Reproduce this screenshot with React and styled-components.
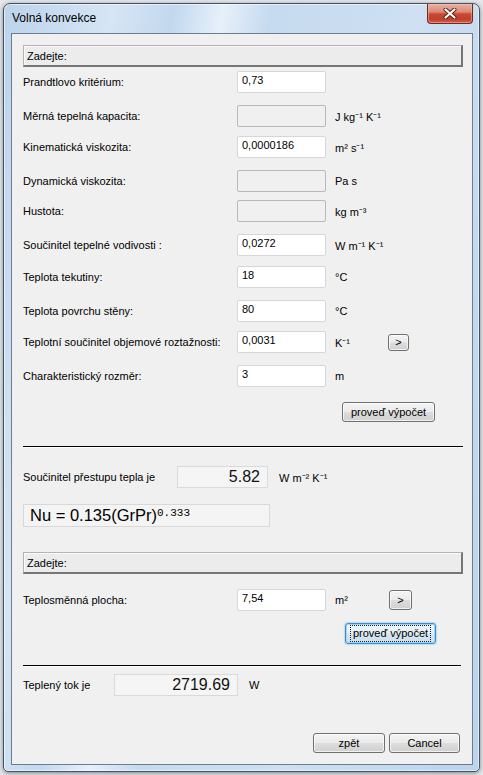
import React from 'react';
import styled, { createGlobalStyle } from 'styled-components';

const Global = createGlobalStyle`
  html, body { margin: 0; padding: 0; background: #e4e6ea; }
  body { width: 483px; height: 775px; overflow: hidden; font-family: "Liberation Sans", Arial, sans-serif; }
  #root { width: 483px; height: 775px; padding: 3px; box-sizing: border-box; }
`;

const UI_FONT = `"Liberation Sans", Arial, sans-serif`;
const UI_SIZE = '11px';

const Window = styled.div`
  width: 477px;
  height: 769px;
  box-sizing: border-box;
  border: 1px solid #41536a;
  border-radius: 7px 7px 5px 5px;
  background: linear-gradient(100deg, #bcd3eb 0%, #d6e5f5 18%, #c3d8ee 28%, #e6f0fa 36%, #c6daef 44%, #cee0f2 68%, #bdd3eb 100%);
  box-shadow: 0 1px 4px rgba(0, 0, 0, 0.45), inset 0 0 0 1px rgba(255, 255, 255, 0.55);
  display: flex;
  flex-direction: column;
  padding: 0 6px 6px 7px;
`;

const TitleBar = styled.div`
  height: 29px;
  display: flex;
  justify-content: space-between;
  align-items: flex-start;
  flex: none;
`;

const Title = styled.div`
  margin: 7px 0 0 1px;
  font-family: ${UI_FONT};
  font-size: 12px;
  line-height: 14px;
  color: #000;
`;

const CloseButton = styled.div`
  width: 46px;
  height: 20px;
  box-sizing: border-box;
  border: 1px solid #6e2a20;
  border-top: none;
  border-radius: 0 0 4px 4px;
  background: linear-gradient(#eab0a2 0%, #da8a76 42%, #c84a35 52%, #c0402c 80%, #d2624b 100%);
  box-shadow: inset 0 0 0 1px rgba(255, 200, 190, 0.45);
  display: flex;
  align-items: center;
  justify-content: center;
`;

const Client = styled.div`
  flex: 1;
  box-sizing: border-box;
  border: 1px solid #6b7d92;
  background: #f0f0f0;
  padding: 11px 9px 0 11px;
  display: flex;
  flex-direction: column;
`;

const SectionHeader = styled.div`
  flex: none;
  height: 22px;
  margin-top: ${p => p.$mt || 0}px;
  box-sizing: border-box;
  border-top: 1px solid #b4b4b4;
  border-left: 1px solid #b4b4b4;
  border-right: 2px solid #767676;
  border-bottom: 2px solid #767676;
  background: #ececec;
  box-shadow: inset 1px 1px 0 #fafafa;
  padding-left: 3px;
  display: flex;
  align-items: center;
  font-family: ${UI_FONT};
  font-size: ${UI_SIZE};
  color: #000;
`;

const Row = styled.div`
  flex: none;
  height: 22px;
  margin-top: ${p => p.$mt || 0}px;
  display: flex;
  align-items: center;
  font-family: ${UI_FONT};
  font-size: ${UI_SIZE};
  color: #000;
`;

const Label = styled.div`
  width: ${p => p.$w || 214}px;
  flex: none;
  white-space: nowrap;
`;

const Field = styled.input`
  width: 89px;
  height: 22px;
  box-sizing: border-box;
  margin: 0;
  border: 1px solid ${p => (p.disabled ? '#b9b9b9' : '#d6d6d6')};
  border-radius: 2px;
  background: ${p => (p.disabled ? '#f0f0f0' : '#ffffff')};
  padding: 0 4px 4px 4px;
  font-family: ${UI_FONT};
  font-size: ${UI_SIZE};
  color: #000;
  outline: none;
  flex: none;
`;

const Unit = styled.div`
  margin-left: ${p => p.$ml || 9}px;
  width: ${p => p.$w || 'auto'};
  flex: none;
  white-space: nowrap;
`;

const Button = styled.button`
  width: ${p => p.$w}px;
  height: ${p => p.$h}px;
  margin: 0;
  padding: 0;
  flex: none;
  box-sizing: border-box;
  border: 1px solid ${p => (p.$focused ? '#3c8dd0' : '#707070')};
  border-radius: 3px;
  background: ${p =>
    p.$focused
      ? 'linear-gradient(#f0f7fb 0%, #e4eff6 48%, #d6e7f2 52%, #cddfec 100%)'
      : 'linear-gradient(#f3f3f3 0%, #ebebeb 48%, #dddddd 52%, #d0d0d0 100%)'};
  box-shadow: ${p =>
    p.$focused
      ? 'inset 0 0 0 1px #9fd6f5, 0 0 1px 1px rgba(100, 180, 230, 0.35)'
      : 'inset 0 0 0 1px rgba(255, 255, 255, 0.7)'};
  font-family: ${UI_FONT};
  font-size: ${UI_SIZE};
  color: #000;
  display: flex;
  align-items: center;
  justify-content: center;
`;

const FocusText = styled.span`
  outline: 1px dotted #202020;
  outline-offset: 1px;
  padding: 0 1px;
  line-height: 13px;
`;

const ButtonRow = styled.div`
  flex: none;
  margin-top: ${p => p.$mt || 0}px;
  padding-left: ${p => p.$pl || 0}px;
  padding-right: ${p => p.$pr || 0}px;
  display: flex;
  justify-content: ${p => (p.$end ? 'flex-end' : 'flex-start')};
  gap: 4px;
`;

const Divider = styled.div`
  flex: none;
  margin-top: ${p => p.$mt || 0}px;
  width: ${p => p.$w}px;
  height: 1px;
  background: #000;
  box-shadow: 0 1px 0 #ffffff;
`;

const ResultBox = styled.div`
  width: ${p => p.$w}px;
  height: 22px;
  flex: none;
  box-sizing: border-box;
  border: 1px solid #dadada;
  background: #f5f5f5;
  padding-right: 7px;
  display: flex;
  align-items: center;
  justify-content: flex-end;
  font-family: ${UI_FONT};
  font-size: 16px;
  color: #111;
`;

const FormulaBox = styled.div`
  flex: none;
  margin-top: ${p => p.$mt || 0}px;
  width: 247px;
  height: 23px;
  box-sizing: border-box;
  border: 1px solid #d8d8d8;
  background: #f4f4f4;
  padding-left: 6px;
  display: flex;
  align-items: center;
  font-family: ${UI_FONT};
  font-size: 16.5px;
  color: #000;
  white-space: nowrap;
`;

const Sup = styled.span`
  font-family: "Liberation Mono", "DejaVu Sans Mono", monospace;
  font-size: 11px;
  align-self: flex-start;
  margin-top: 2px;
`;

const inputs = [
  { label: 'Prandtlovo kritérium:', value: '0,73', unit: '', mt: 4 },
  { label: 'Měrná tepelná kapacita:', value: '', unit: 'J kg⁻¹ K⁻¹', disabled: true, mt: 12 },
  { label: 'Kinematická viskozita:', value: '0,0000186', unit: 'm² s⁻¹', mt: 9 },
  { label: 'Dynamická viskozita:', value: '', unit: 'Pa s', disabled: true, mt: 12 },
  { label: 'Hustota:', value: '', unit: 'kg m⁻³', disabled: true, mt: 8 },
  { label: 'Součinitel tepelné vodivosti :', value: '0,0272', unit: 'W m⁻¹ K⁻¹', mt: 12 },
  { label: 'Teplota tekutiny:', value: '18', unit: '°C', mt: 10 },
  { label: 'Teplota povrchu stěny:', value: '80', unit: '°C', mt: 12 },
  { label: 'Teplotní součinitel objemové roztažnosti:', value: '0,0031', unit: 'K⁻¹', mt: 9, more: { w: 21, h: 17 } },
  { label: 'Charakteristický rozměr:', value: '3', unit: 'm', mt: 12 },
];

function CloseGlyph() {
  return (
    <svg width="14" height="11" viewBox="0 0 14 11">
      <path d="M2.5 1.5 L11.5 9.5 M11.5 1.5 L2.5 9.5" stroke="#5a1c12" strokeWidth="4" strokeLinecap="round" />
      <path d="M2.5 1.5 L11.5 9.5 M11.5 1.5 L2.5 9.5" stroke="#ffffff" strokeWidth="2.2" strokeLinecap="round" />
    </svg>
  );
}

export default function App() {
  return (
    <>
      <Global />
      <Window>
        <TitleBar>
          <Title>Volná konvekce</Title>
          <CloseButton>
            <CloseGlyph />
          </CloseButton>
        </TitleBar>
        <Client>
          <SectionHeader>Zadejte:</SectionHeader>
          {inputs.map(it => (
            <Row key={it.label} $mt={it.mt}>
              <Label>{it.label}</Label>
              <Field value={it.value} disabled={it.disabled} readOnly />
              {it.unit && <Unit $w={it.more ? '53px' : 'auto'}>{it.unit}</Unit>}
              {it.more && (
                <Button $w={it.more.w} $h={it.more.h}>&gt;</Button>
              )}
            </Row>
          ))}
          <ButtonRow $mt={15} $pl={319}>
            <Button $w={93} $h={20}>proveď výpočet</Button>
          </ButtonRow>
          <Divider $mt={24} $w={440} />
          <Row $mt={19}>
            <Label $w={154}>Součinitel přestupu tepla je</Label>
            <ResultBox $w={91}>5.82</ResultBox>
            <Unit $ml={11}>W m⁻² K⁻¹</Unit>
          </Row>
          <FormulaBox $mt={16}>
            Nu = 0.135(GrPr)<Sup>0.333</Sup>
          </FormulaBox>
          <SectionHeader $mt={25}>Zadejte:</SectionHeader>
          <Row $mt={15}>
            <Label>Teplosměnná plocha:</Label>
            <Field value="7,54" readOnly />
            <Unit $w="54px">m²</Unit>
            <Button $w={23} $h={20}>&gt;</Button>
          </Row>
          <ButtonRow $mt={12} $pl={322}>
            <Button $w={91} $h={21} $focused>
              <FocusText>proveď výpočet</FocusText>
            </Button>
          </ButtonRow>
          <Divider $mt={21} $w={438} />
          <Row $mt={8}>
            <Label $w={91}>Teplený tok je</Label>
            <ResultBox $w={124}>2719.69</ResultBox>
            <Unit $ml={11}>W</Unit>
          </Row>
          <ButtonRow $mt={37} $end $pr={3}>
            <Button $w={72} $h={20}>zpět</Button>
            <Button $w={71} $h={20}>Cancel</Button>
          </ButtonRow>
        </Client>
      </Window>
    </>
  );
}
